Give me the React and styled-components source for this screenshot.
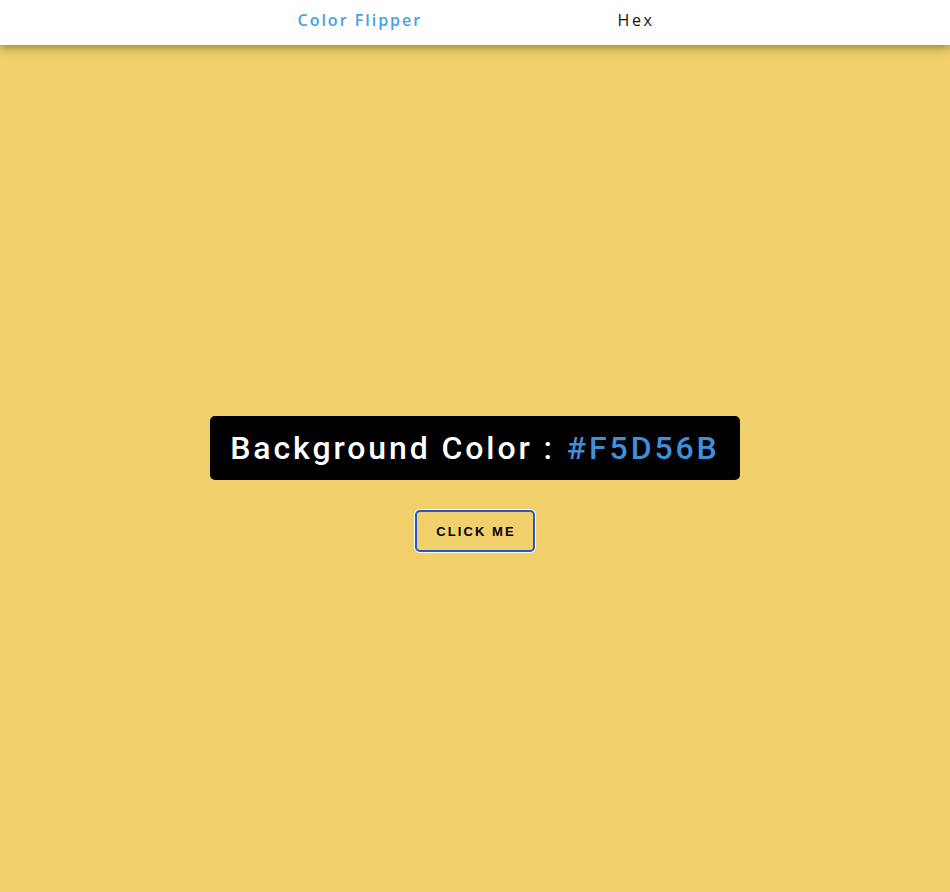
import styled, { createGlobalStyle } from 'styled-components';

const GlobalStyle = createGlobalStyle`
    * {
        box-sizing: border-box;
    }
    body {
        margin: 0;
        background: #f1d06b;
        font-family: "Open Sans", sans-serif;
    }
`;

const Nav = styled.nav`
    height: 45px;
    padding-bottom: 6px;
    background: #fff;
    box-shadow: 0 3px 9px rgba(80, 60, 0, 0.5);
    display: flex;
    align-items: center;
    justify-content: center;
    position: relative;
    z-index: 1;
`;

const NavCenter = styled.div`
    width: 359px;
    padding-left: 2px;
    display: flex;
    align-items: center;
    justify-content: space-between;
`;

const NavLink = styled.span`
    font-family: "Open Sans", sans-serif;
    font-size: 16px;
    letter-spacing: ${({ brand }) => (brand ? '2px' : '2.6px')};
    font-weight: ${({ brand }) => (brand ? 600 : 400)};
    color: ${({ brand }) => (brand ? '#49a0e4' : '#111')};
`;

const Main = styled.main`
    min-height: calc(100vh - 45px);
    display: flex;
    flex-direction: column;
    align-items: center;
    justify-content: center;
    gap: 30px;
    padding-top: 31px;
`;

const Heading = styled.h2`
    margin: 0;
    background: #000;
    color: #fff;
    border-radius: 5px;
    height: 64px;
    padding: 0 20px;
    display: flex;
    align-items: center;
    font-family: Roboto, sans-serif;
    font-weight: 500;
    font-size: 32px;
    letter-spacing: 2.9px;
`;

const HexValue = styled.span`
    color: #3f8fd9;
    margin-left: 12px;
`;

const Button = styled.button`
    width: 120px;
    height: 42px;
    background: transparent;
    border: 2px solid #2457d2;
    border-radius: 5px;
    box-shadow: 0 0 0 1px #fff;
    font-family: "Liberation Sans", Arial, sans-serif;
    font-weight: 700;
    font-size: 13px;
    letter-spacing: 2.1px;
    color: #000;
    cursor: pointer;
    padding: 0 0 0 2px;
`;

export default function App() {
    return (
        <>
            <GlobalStyle />
            <Nav>
                <NavCenter>
                    <NavLink brand>Color Flipper</NavLink>
                    <NavLink>Hex</NavLink>
                </NavCenter>
            </Nav>
            <Main>
                <Heading>
                    Background Color :<HexValue>#F5D56B</HexValue>
                </Heading>
                <Button>CLICK ME</Button>
            </Main>
        </>
    );
}
